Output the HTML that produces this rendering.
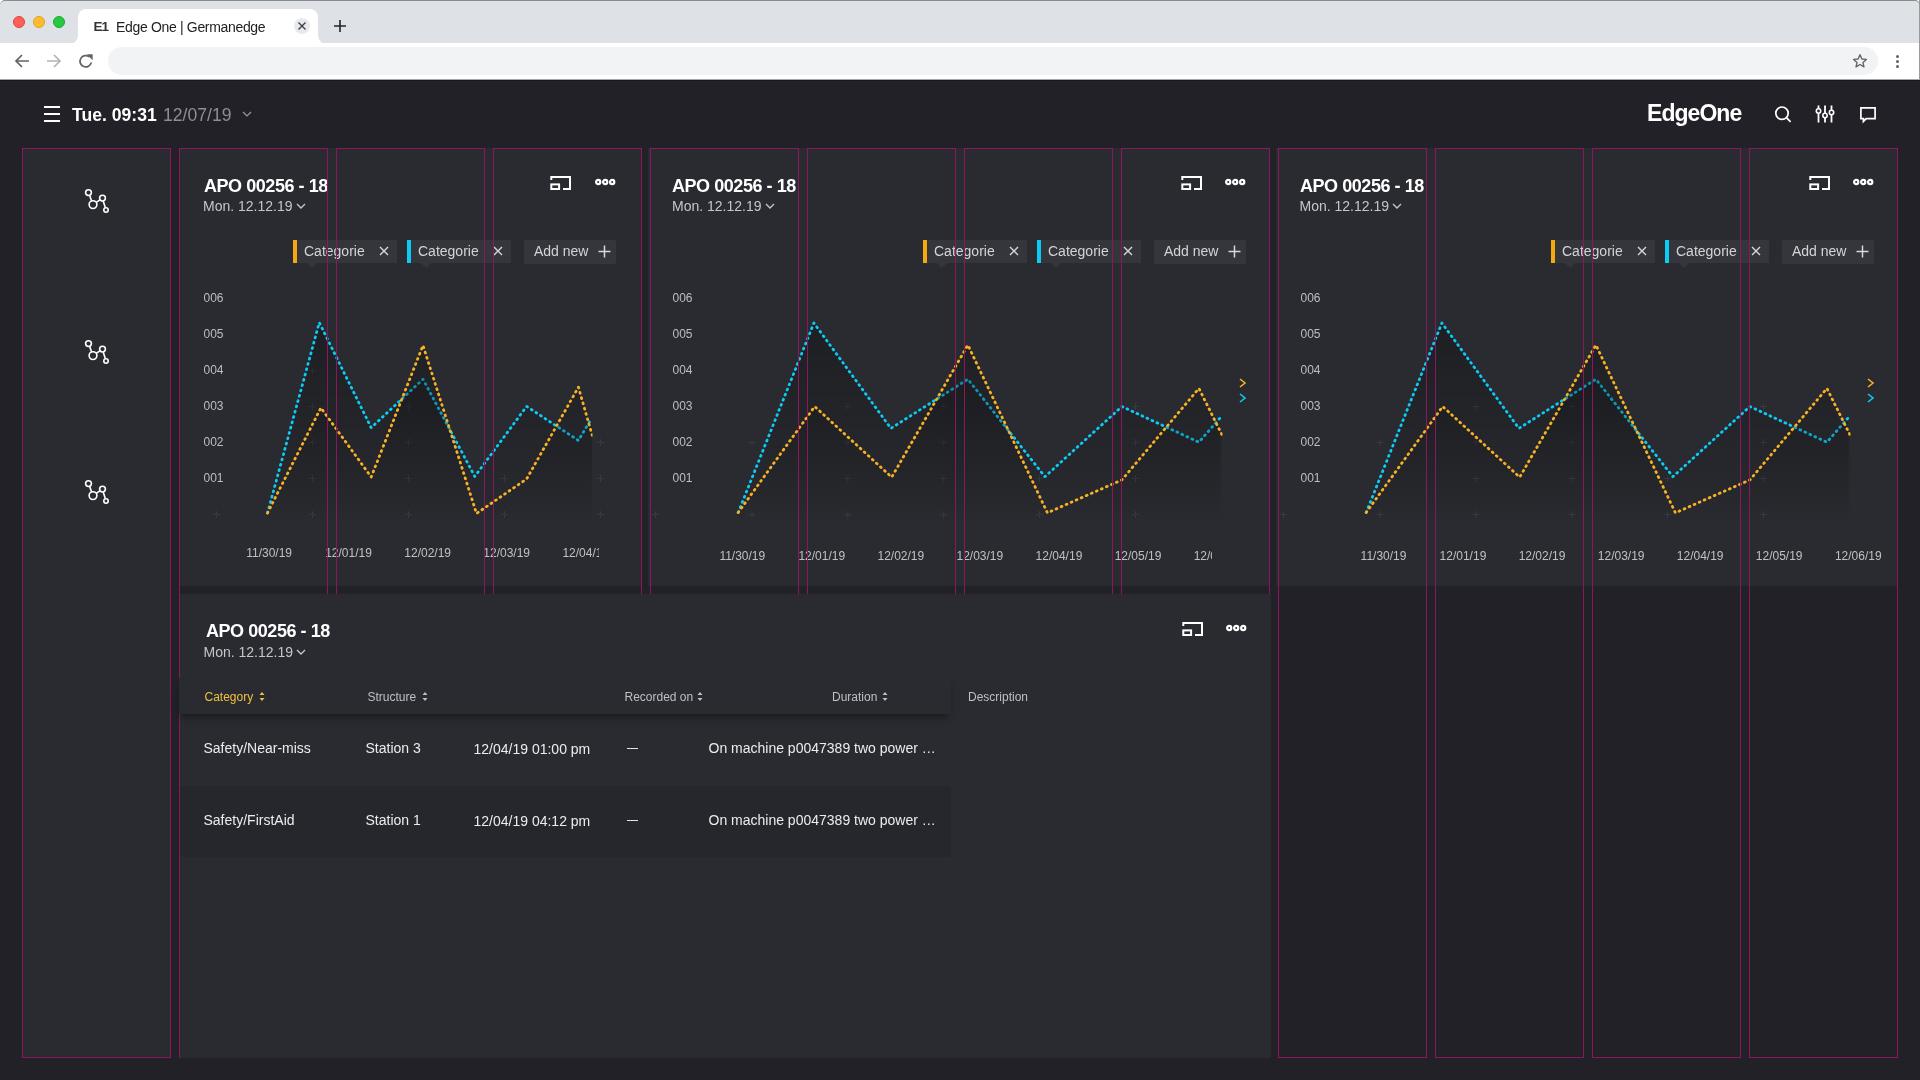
<!DOCTYPE html>
<html><head><meta charset="utf-8"><title>Edge One | Germanedge</title>
<style>
*{box-sizing:border-box}
html,body{margin:0;padding:0;width:1920px;height:1080px;overflow:hidden;background:#212127;font-family:"Liberation Sans",sans-serif;}
#root{position:absolute;left:0;top:0;width:1920px;height:1080px;will-change:transform}
.abs{position:absolute}
#chrome{position:absolute;left:0;top:0;width:1920px;height:80px;background:#fff}
#tabbar{position:absolute;left:0;top:0;width:1920px;height:43px;background:#dee1e6;border-top:1px solid #8a8a8a;border-right:1px solid #9a9a9a;border-radius:5px 5px 0 0}
.light{position:absolute;width:12px;height:12px;border-radius:50%;top:15px}
#tab{position:absolute;left:78px;top:7.5px;width:240px;height:35px;background:#fff;border-radius:8px 8px 0 0}
#tab:before,#tab:after{content:"";position:absolute;bottom:0;width:8px;height:8px;background:radial-gradient(circle at 0 0,transparent 8px,#fff 8.5px)}
#tab:before{left:-8px;background:radial-gradient(circle at 0 0,transparent 7.5px,#fff 8px)}
#tab:after{right:-8px;background:radial-gradient(circle at 100% 0,transparent 7.5px,#fff 8px)}
#omni{position:absolute;left:108px;top:47px;width:1770px;height:28px;border-radius:14px;background:#f1f3f4}
.ovl{position:absolute;top:148px;width:149px;height:910px;border:1px solid #8c1660;z-index:5}
.card{position:absolute;background:#2a2b30}
.ttl{position:absolute;color:#fff;font-weight:bold;font-size:18px;letter-spacing:-0.45px;line-height:20px;white-space:nowrap;z-index:4}
.sub{position:absolute;color:#c6c6ca;font-size:14px;line-height:16px;white-space:nowrap;z-index:4}
.tag{position:absolute;width:104px;height:23px;background:#35363c;z-index:4}
.tag .bar{position:absolute;left:0;top:0;width:4px;height:23px}
.tag .tt{position:absolute;left:11px;top:3px;font-size:14px;line-height:17px;color:#d4d4d8}
.tag .tx{position:absolute;left:86px;top:6px}
.tag .ptr{position:absolute;left:14px;top:23px;width:0;height:0;border-left:5px solid transparent;border-right:5px solid transparent;border-top:5px solid #35363c}
.addnew{position:absolute;width:92px;height:24px;background:#35363c;border-radius:2px;z-index:4}
.addnew .tt{position:absolute;left:10px;top:3px;font-size:14px;line-height:17px;color:#d4d4d8}
.addnew .tp{position:absolute;left:74px;top:4.5px}
.yl{position:absolute;font-size:12px;line-height:14px;color:#bdbdc2;z-index:4}
.xl{position:absolute;top:545px;font-size:12px;line-height:14px;color:#c0c0c4;white-space:nowrap}
.th{position:absolute;top:690px;font-size:12px;line-height:14px;color:#bfbfc4;white-space:nowrap;z-index:8}
.td{position:absolute;font-size:14px;line-height:16px;color:#ececef;white-space:nowrap;z-index:8}
</style></head><body><div id="root">
<div id="chrome">
<div id="tabbar">
<div class="light" style="left:13px;background:#fe5f57;border:0.5px solid #e0443e"></div>
<div class="light" style="left:33px;background:#febc2e;border:0.5px solid #dea123"></div>
<div class="light" style="left:53px;background:#28c840;border:0.5px solid #1aab29"></div>
<div id="tab">
<span class="abs" style="left:15.5px;top:10px;font-size:13.5px;font-weight:bold;color:#333;letter-spacing:-0.9px;line-height:15px">E1</span>
<span class="abs" style="left:38px;top:10px;font-size:14px;color:#222;letter-spacing:-0.33px;line-height:17px;white-space:nowrap">Edge One | Germanedge</span>
<div class="abs" style="left:216px;top:9px;width:16px;height:16px;border-radius:50%;background:#e8eaed"></div>
<svg class="abs" style="left:219px;top:12px" width="10" height="10" viewBox="0 0 10 10"><path d="M1.5 1.5 L8.5 8.5 M8.5 1.5 L1.5 8.5" stroke="#3c4043" stroke-width="1.4"/></svg>
</div>
<svg class="abs" style="left:333px;top:18px" width="14" height="14" viewBox="0 0 14 14"><path d="M7 1 V13 M1 7 H13" stroke="#222326" stroke-width="1.6"/></svg>
</div>
<svg class="abs" style="left:14px;top:53px" width="16" height="16" viewBox="0 0 16 16"><path d="M15 8 H2 M8 2 L2 8 L8 14" fill="none" stroke="#5f6368" stroke-width="1.7"/></svg>
<svg class="abs" style="left:46px;top:53px" width="16" height="16" viewBox="0 0 16 16"><path d="M1 8 H14 M8 2 L14 8 L8 14" fill="none" stroke="#b0b3b8" stroke-width="1.7"/></svg>
<svg class="abs" style="left:78px;top:53px" width="16" height="16" viewBox="0 0 16 16"><path d="M13.3 9.3 A5.7 5.7 0 1 1 11.4 3.9" fill="none" stroke="#5f6368" stroke-width="1.7"/><path d="M8.6 1.2 H14.6 V7.2 Z" fill="#5f6368"/></svg>
<div id="omni"></div>
<svg class="abs" style="left:1852px;top:53px" width="16" height="16" viewBox="0 0 24 24"><path d="M12 2.6 L14.8 9 L21.6 9.6 L16.4 14.1 L18 20.8 L12 17.2 L6 20.8 L7.6 14.1 L2.4 9.6 L9.2 9 Z" fill="none" stroke="#5f6368" stroke-width="2" stroke-linejoin="round"/></svg>
<div class="abs" style="left:1896px;top:55px;width:3.2px;height:3.2px;border-radius:50%;background:#5f6368"></div>
<div class="abs" style="left:1896px;top:60px;width:3.2px;height:3.2px;border-radius:50%;background:#5f6368"></div>
<div class="abs" style="left:1896px;top:65px;width:3.2px;height:3.2px;border-radius:50%;background:#5f6368"></div>
<div class="abs" style="left:1919px;top:0;width:1px;height:80px;background:#9a9a9a"></div>
</div>
<div class="abs" style="left:0;top:79px;width:1920px;height:1px;background:#a6a6a9"></div><div class="abs" style="left:0;top:80px;width:1920px;height:1px;background:#18181c"></div>


<div class="abs" style="left:44px;top:106px;width:16px;height:2px;background:#fff"></div>
<div class="abs" style="left:44px;top:113px;width:16px;height:2px;background:#fff"></div>
<div class="abs" style="left:44px;top:120px;width:16px;height:2px;background:#fff"></div>
<div class="abs" style="left:72px;top:104.5px;font-size:17.6px;font-weight:bold;color:#fff;line-height:20px;white-space:nowrap">Tue. 09:31</div>
<div class="abs" style="left:163px;top:104.5px;font-size:17.6px;color:#8e8e93;line-height:20px;white-space:nowrap">12/07/19</div>
<svg class="abs" style="left:242px;top:111px" width="10" height="7" viewBox="0 0 10 7"><path d="M1 1 L5 5 L9 1" fill="none" stroke="#9a9a9e" stroke-width="1.2"/></svg>
<div class="abs" style="left:1647px;top:99.5px;font-size:23px;font-weight:bold;color:#fff;line-height:26px;letter-spacing:-0.95px;white-space:nowrap">EdgeOne</div>
<svg class="abs" style="left:1773px;top:104px" width="20" height="20" viewBox="0 0 20 20"><circle cx="9" cy="9.2" r="6.2" fill="none" stroke="#fff" stroke-width="1.7"/><path d="M13.4 13.6 L17.6 17.8" stroke="#fff" stroke-width="1.7"/></svg>
<svg class="abs" style="left:1815px;top:105px" width="20" height="18" viewBox="0 0 20 18"><g stroke="#fff" stroke-width="1.8" fill="none"><path d="M3.5 0.5 V17.5 M10 0.5 V17.5 M16.5 0.5 V17.5"/></g><g fill="#212127" stroke="#fff" stroke-width="1.6"><circle cx="3.5" cy="6" r="2.2"/><circle cx="10" cy="10.5" r="2.2"/><circle cx="16.5" cy="7.5" r="2.2"/></g></svg>
<svg class="abs" style="left:1859px;top:106px" width="18" height="18" viewBox="0 0 18 18"><path d="M1.9 1.9 H16.1 V12.6 H7.2 L4.4 15.4 V12.6 H1.9 Z" fill="none" stroke="#fff" stroke-width="1.7" stroke-linejoin="miter"/></svg>

<div class="card" style="left:22px;top:148px;width:149px;height:910px"></div>
<svg style="z-index:6;position:absolute;left:81.5px;top:185.6px" width="30" height="30" viewBox="0 0 30 30">
<g fill="none" stroke="#fff" stroke-width="1.6">
<circle cx="6.5" cy="6.6" r="2.9"/><circle cx="11" cy="18.6" r="3.9"/><circle cx="20.5" cy="12.1" r="2.9"/><circle cx="24" cy="24" r="2.2"/>
<line x1="7.6" y1="9.3" x2="9.6" y2="15"/><line x1="14.2" y1="16.4" x2="17.9" y2="13.8"/><line x1="21.2" y1="14.9" x2="23.4" y2="21.8"/>
</g></svg>
<svg style="z-index:6;position:absolute;left:81.5px;top:337.3px" width="30" height="30" viewBox="0 0 30 30">
<g fill="none" stroke="#fff" stroke-width="1.6">
<circle cx="6.5" cy="6.6" r="2.9"/><circle cx="11" cy="18.6" r="3.9"/><circle cx="20.5" cy="12.1" r="2.9"/><circle cx="24" cy="24" r="2.2"/>
<line x1="7.6" y1="9.3" x2="9.6" y2="15"/><line x1="14.2" y1="16.4" x2="17.9" y2="13.8"/><line x1="21.2" y1="14.9" x2="23.4" y2="21.8"/>
</g></svg>
<svg style="z-index:6;position:absolute;left:81.5px;top:477.3px" width="30" height="30" viewBox="0 0 30 30">
<g fill="none" stroke="#fff" stroke-width="1.6">
<circle cx="6.5" cy="6.6" r="2.9"/><circle cx="11" cy="18.6" r="3.9"/><circle cx="20.5" cy="12.1" r="2.9"/><circle cx="24" cy="24" r="2.2"/>
<line x1="7.6" y1="9.3" x2="9.6" y2="15"/><line x1="14.2" y1="16.4" x2="17.9" y2="13.8"/><line x1="21.2" y1="14.9" x2="23.4" y2="21.8"/>
</g></svg>
<div class="card" style="left:179px;top:148px;width:463px;height:438px"></div>
<div class="card" style="left:648px;top:148px;width:622px;height:438px"></div>
<div class="card" style="left:1276px;top:148px;width:622px;height:438px"></div>
<div class="ovl" style="left:22px"></div>
<div class="ovl" style="left:179px"></div>
<div class="ovl" style="left:336px"></div>
<div class="ovl" style="left:493px"></div>
<div class="ovl" style="left:650px"></div>
<div class="ovl" style="left:807px"></div>
<div class="ovl" style="left:964px"></div>
<div class="ovl" style="left:1121px"></div>
<div class="ovl" style="left:1278px"></div>
<div class="ovl" style="left:1435px"></div>
<div class="ovl" style="left:1592px"></div>
<div class="ovl" style="left:1749px"></div>
<div class="ttl" style="left:204px;top:176px">APO 00256 - 18</div>
<div class="sub" style="left:203px;top:198px">Mon. 12.12.19<svg width="10" height="7" viewBox="0 0 10 7" style="margin-left:3px;vertical-align:1px"><path d="M1 1 L5 5 L9 1" fill="none" stroke="#c8c8cc" stroke-width="1.3"/></svg></div>
<div class="ttl" style="left:672px;top:176px">APO 00256 - 18</div>
<div class="sub" style="left:672px;top:198px">Mon. 12.12.19<svg width="10" height="7" viewBox="0 0 10 7" style="margin-left:3px;vertical-align:1px"><path d="M1 1 L5 5 L9 1" fill="none" stroke="#c8c8cc" stroke-width="1.3"/></svg></div>
<div class="ttl" style="left:1300px;top:176px">APO 00256 - 18</div>
<div class="sub" style="left:1299.5px;top:198px">Mon. 12.12.19<svg width="10" height="7" viewBox="0 0 10 7" style="margin-left:3px;vertical-align:1px"><path d="M1 1 L5 5 L9 1" fill="none" stroke="#c8c8cc" stroke-width="1.3"/></svg></div>
<svg style="z-index:4;position:absolute;left:549px;top:175px" width="23" height="18" viewBox="0 0 23 18">
<g fill="none" stroke="#fff" stroke-width="2">
<path d="M2.3 5 V2 H21 V14 H14"/><rect x="2.3" y="9.4" width="7.8" height="4.6"/>
</g></svg>
<svg style="z-index:4;position:absolute;left:595px;top:178px" width="21" height="8" viewBox="0 0 21 8">
<g fill="none" stroke="#fff" stroke-width="2.2"><circle cx="3.2" cy="4" r="2.1"/><circle cx="10.2" cy="4" r="2.1"/><circle cx="17.2" cy="4" r="2.1"/></g></svg>
<svg style="z-index:4;position:absolute;left:1180px;top:175px" width="23" height="18" viewBox="0 0 23 18">
<g fill="none" stroke="#fff" stroke-width="2">
<path d="M2.3 5 V2 H21 V14 H14"/><rect x="2.3" y="9.4" width="7.8" height="4.6"/>
</g></svg>
<svg style="z-index:4;position:absolute;left:1225px;top:178px" width="21" height="8" viewBox="0 0 21 8">
<g fill="none" stroke="#fff" stroke-width="2.2"><circle cx="3.2" cy="4" r="2.1"/><circle cx="10.2" cy="4" r="2.1"/><circle cx="17.2" cy="4" r="2.1"/></g></svg>
<svg style="z-index:4;position:absolute;left:1808px;top:175px" width="23" height="18" viewBox="0 0 23 18">
<g fill="none" stroke="#fff" stroke-width="2">
<path d="M2.3 5 V2 H21 V14 H14"/><rect x="2.3" y="9.4" width="7.8" height="4.6"/>
</g></svg>
<svg style="z-index:4;position:absolute;left:1853px;top:178px" width="21" height="8" viewBox="0 0 21 8">
<g fill="none" stroke="#fff" stroke-width="2.2"><circle cx="3.2" cy="4" r="2.1"/><circle cx="10.2" cy="4" r="2.1"/><circle cx="17.2" cy="4" r="2.1"/></g></svg>
<div class="tag" style="left:293px;top:240px"><div class="bar" style="background:#f5a90c"></div><span class="tt">Categorie</span><svg class="tx" width="10" height="10" viewBox="0 0 10 10"><path d="M1 1 L9 9 M9 1 L1 9" stroke="#d8d8dc" stroke-width="1.35"/></svg><div class="ptr"></div></div><div class="tag" style="left:407px;top:240px"><div class="bar" style="background:#0ccbf4"></div><span class="tt">Categorie</span><svg class="tx" width="10" height="10" viewBox="0 0 10 10"><path d="M1 1 L9 9 M9 1 L1 9" stroke="#d8d8dc" stroke-width="1.35"/></svg><div class="ptr"></div></div><div class="addnew" style="left:524px;top:240px"><span class="tt">Add new</span><svg class="tp" width="13" height="13" viewBox="0 0 13 13"><path d="M6.5 0.5 V12.5 M0.5 6.5 H12.5" stroke="#d8d8dc" stroke-width="1.5"/></svg></div>
<div class="tag" style="left:923px;top:240px"><div class="bar" style="background:#f5a90c"></div><span class="tt">Categorie</span><svg class="tx" width="10" height="10" viewBox="0 0 10 10"><path d="M1 1 L9 9 M9 1 L1 9" stroke="#d8d8dc" stroke-width="1.35"/></svg><div class="ptr"></div></div><div class="tag" style="left:1037px;top:240px"><div class="bar" style="background:#0ccbf4"></div><span class="tt">Categorie</span><svg class="tx" width="10" height="10" viewBox="0 0 10 10"><path d="M1 1 L9 9 M9 1 L1 9" stroke="#d8d8dc" stroke-width="1.35"/></svg><div class="ptr"></div></div><div class="addnew" style="left:1154px;top:240px"><span class="tt">Add new</span><svg class="tp" width="13" height="13" viewBox="0 0 13 13"><path d="M6.5 0.5 V12.5 M0.5 6.5 H12.5" stroke="#d8d8dc" stroke-width="1.5"/></svg></div>
<div class="tag" style="left:1551px;top:240px"><div class="bar" style="background:#f5a90c"></div><span class="tt">Categorie</span><svg class="tx" width="10" height="10" viewBox="0 0 10 10"><path d="M1 1 L9 9 M9 1 L1 9" stroke="#d8d8dc" stroke-width="1.35"/></svg><div class="ptr"></div></div><div class="tag" style="left:1665px;top:240px"><div class="bar" style="background:#0ccbf4"></div><span class="tt">Categorie</span><svg class="tx" width="10" height="10" viewBox="0 0 10 10"><path d="M1 1 L9 9 M9 1 L1 9" stroke="#d8d8dc" stroke-width="1.35"/></svg><div class="ptr"></div></div><div class="addnew" style="left:1782px;top:240px"><span class="tt">Add new</span><svg class="tp" width="13" height="13" viewBox="0 0 13 13"><path d="M6.5 0.5 V12.5 M0.5 6.5 H12.5" stroke="#d8d8dc" stroke-width="1.5"/></svg></div>
<div class="yl" style="left:203.5px;top:291px">006</div><div class="yl" style="left:203.5px;top:327px">005</div><div class="yl" style="left:203.5px;top:363px">004</div><div class="yl" style="left:203.5px;top:399px">003</div><div class="yl" style="left:203.5px;top:435px">002</div><div class="yl" style="left:203.5px;top:471px">001</div>
<div class="yl" style="left:672.5px;top:291px">006</div><div class="yl" style="left:672.5px;top:327px">005</div><div class="yl" style="left:672.5px;top:363px">004</div><div class="yl" style="left:672.5px;top:399px">003</div><div class="yl" style="left:672.5px;top:435px">002</div><div class="yl" style="left:672.5px;top:471px">001</div>
<div class="yl" style="left:1300.5px;top:291px">006</div><div class="yl" style="left:1300.5px;top:327px">005</div><div class="yl" style="left:1300.5px;top:363px">004</div><div class="yl" style="left:1300.5px;top:399px">003</div><div class="yl" style="left:1300.5px;top:435px">002</div><div class="yl" style="left:1300.5px;top:471px">001</div>
<svg class="abs" style="left:0;top:0;z-index:2" width="1920" height="1080" viewBox="0 0 1920 1080"><defs>
<linearGradient id="gf" gradientUnits="userSpaceOnUse" x1="0" y1="320" x2="0" y2="520">
<stop offset="0" stop-color="#111115" stop-opacity="0.62"/>
<stop offset="1" stop-color="#111115" stop-opacity="0"/>
</linearGradient>
</defs><path d="M213 514.5 H220 M216.5 511 V518" stroke="#393a41" stroke-width="1"/><path d="M309 370.5 H316 M312.5 367 V374" stroke="#393a41" stroke-width="1"/><path d="M309 406.5 H316 M312.5 403 V410" stroke="#393a41" stroke-width="1"/><path d="M309 442.5 H316 M312.5 439 V446" stroke="#393a41" stroke-width="1"/><path d="M309 478.5 H316 M312.5 475 V482" stroke="#393a41" stroke-width="1"/><path d="M309 514.5 H316 M312.5 511 V518" stroke="#393a41" stroke-width="1"/><path d="M405 406.5 H412 M408.5 403 V410" stroke="#393a41" stroke-width="1"/><path d="M405 442.5 H412 M408.5 439 V446" stroke="#393a41" stroke-width="1"/><path d="M405 478.5 H412 M408.5 475 V482" stroke="#393a41" stroke-width="1"/><path d="M405 514.5 H412 M408.5 511 V518" stroke="#393a41" stroke-width="1"/><path d="M501 478.5 H508 M504.5 475 V482" stroke="#393a41" stroke-width="1"/><path d="M501 514.5 H508 M504.5 511 V518" stroke="#393a41" stroke-width="1"/><path d="M597 442.5 H604 M600.5 439 V446" stroke="#393a41" stroke-width="1"/><path d="M597 478.5 H604 M600.5 475 V482" stroke="#393a41" stroke-width="1"/><path d="M597 514.5 H604 M600.5 511 V518" stroke="#393a41" stroke-width="1"/><path d="M652 514.5 H659 M655.5 511 V518" stroke="#393a41" stroke-width="1"/><path d="M748.5 442.5 H755.5 M752.0 439 V446" stroke="#393a41" stroke-width="1"/><path d="M748.5 514.5 H755.5 M752.0 511 V518" stroke="#393a41" stroke-width="1"/><path d="M844.3 406.5 H851.3 M847.8 403 V410" stroke="#393a41" stroke-width="1"/><path d="M844.3 442.5 H851.3 M847.8 439 V446" stroke="#393a41" stroke-width="1"/><path d="M844.3 478.5 H851.3 M847.8 475 V482" stroke="#393a41" stroke-width="1"/><path d="M844.3 514.5 H851.3 M847.8 511 V518" stroke="#393a41" stroke-width="1"/><path d="M940.2 406.5 H947.2 M943.7 403 V410" stroke="#393a41" stroke-width="1"/><path d="M940.2 442.5 H947.2 M943.7 439 V446" stroke="#393a41" stroke-width="1"/><path d="M940.2 478.5 H947.2 M943.7 475 V482" stroke="#393a41" stroke-width="1"/><path d="M940.2 514.5 H947.2 M943.7 511 V518" stroke="#393a41" stroke-width="1"/><path d="M1036 478.5 H1043 M1039.5 475 V482" stroke="#393a41" stroke-width="1"/><path d="M1036 514.5 H1043 M1039.5 511 V518" stroke="#393a41" stroke-width="1"/><path d="M1132 406.5 H1139 M1135.5 403 V410" stroke="#393a41" stroke-width="1"/><path d="M1132 442.5 H1139 M1135.5 439 V446" stroke="#393a41" stroke-width="1"/><path d="M1132 478.5 H1139 M1135.5 475 V482" stroke="#393a41" stroke-width="1"/><path d="M1132 514.5 H1139 M1135.5 511 V518" stroke="#393a41" stroke-width="1"/><path d="M1280 514.5 H1287 M1283.5 511 V518" stroke="#393a41" stroke-width="1"/><path d="M1376.5 442.5 H1383.5 M1380.0 439 V446" stroke="#393a41" stroke-width="1"/><path d="M1376.5 514.5 H1383.5 M1380.0 511 V518" stroke="#393a41" stroke-width="1"/><path d="M1472.3 406.5 H1479.3 M1475.8 403 V410" stroke="#393a41" stroke-width="1"/><path d="M1472.3 442.5 H1479.3 M1475.8 439 V446" stroke="#393a41" stroke-width="1"/><path d="M1472.3 478.5 H1479.3 M1475.8 475 V482" stroke="#393a41" stroke-width="1"/><path d="M1472.3 514.5 H1479.3 M1475.8 511 V518" stroke="#393a41" stroke-width="1"/><path d="M1568.2 406.5 H1575.2 M1571.7 403 V410" stroke="#393a41" stroke-width="1"/><path d="M1568.2 442.5 H1575.2 M1571.7 439 V446" stroke="#393a41" stroke-width="1"/><path d="M1568.2 478.5 H1575.2 M1571.7 475 V482" stroke="#393a41" stroke-width="1"/><path d="M1568.2 514.5 H1575.2 M1571.7 511 V518" stroke="#393a41" stroke-width="1"/><path d="M1664 478.5 H1671 M1667.5 475 V482" stroke="#393a41" stroke-width="1"/><path d="M1664 514.5 H1671 M1667.5 511 V518" stroke="#393a41" stroke-width="1"/><path d="M1760 406.5 H1767 M1763.5 403 V410" stroke="#393a41" stroke-width="1"/><path d="M1760 442.5 H1767 M1763.5 439 V446" stroke="#393a41" stroke-width="1"/><path d="M1760 478.5 H1767 M1763.5 475 V482" stroke="#393a41" stroke-width="1"/><path d="M1760 514.5 H1767 M1763.5 511 V518" stroke="#393a41" stroke-width="1"/><clipPath id="c1"><rect x="180" y="280" width="412.5" height="260"/></clipPath><clipPath id="c2"><rect x="651" y="280" width="571.5" height="260"/></clipPath><clipPath id="c3"><rect x="1279" y="280" width="571.5" height="260"/></clipPath><g clip-path="url(#c1)"><path d="M267.5 513.0 L319.3 322.6 L371.2 427.7 L423.0 379.2 L474.8 476.5 L526.6 406.4 L578.4 440.5 L591.5 418.5 L591.5 522 L267.5 522 Z" fill="url(#gf)" opacity="0.75"/><path d="M267.5 513.0 L319.3 322.6 L371.2 427.7 L423.0 379.2 L474.8 476.5 L526.6 406.4 L578.4 440.5 L591.5 418.5" fill="none" stroke="#0ccbf4" stroke-width="2.8" stroke-linecap="round" stroke-linejoin="round" stroke-dasharray="0.9 4.6"/><path d="M267.5 513.0 L320.9 407.8 L371.2 477.0 L423.0 345.4 L476.5 513.5 L526.6 479.0 L578.4 387.2 L592.2 435.3 L592.2 522 L267.5 522 Z" fill="url(#gf)" opacity="0.75"/><path d="M267.5 513.0 L320.9 407.8 L371.2 477.0 L423.0 345.4 L476.5 513.5 L526.6 479.0 L578.4 387.2 L592.2 435.3" fill="none" stroke="#f6b124" stroke-width="2.8" stroke-linecap="round" stroke-linejoin="round" stroke-dasharray="0.9 4.6"/></g><g clip-path="url(#c2)"><path d="M738.2 512.5 L813.9 323.0 L890.9 428.4 L967.9 379.2 L1044.9 476.7 L1121.9 406.5 L1198.9 442.2 L1220.0 418.0 L1220.0 522 L738.2 522 Z" fill="url(#gf)" opacity="0.75"/><path d="M738.2 512.5 L813.9 323.0 L890.9 428.4 L967.9 379.2 L1044.9 476.7 L1121.9 406.5 L1198.9 442.2 L1220.0 418.0" fill="none" stroke="#0ccbf4" stroke-width="2.8" stroke-linecap="round" stroke-linejoin="round" stroke-dasharray="0.9 4.6"/><path d="M738.2 512.5 L814.7 406.5 L891.7 477.2 L967.9 345.0 L1047.4 512.8 L1121.9 479.9 L1198.9 388.4 L1222.0 434.8 L1222.0 522 L738.2 522 Z" fill="url(#gf)" opacity="0.75"/><path d="M738.2 512.5 L814.7 406.5 L891.7 477.2 L967.9 345.0 L1047.4 512.8 L1121.9 479.9 L1198.9 388.4 L1222.0 434.8" fill="none" stroke="#f6b124" stroke-width="2.8" stroke-linecap="round" stroke-linejoin="round" stroke-dasharray="0.9 4.6"/></g><g clip-path="url(#c3)"><path d="M1366.2 512.5 L1441.9 323.0 L1518.9 428.4 L1595.9 379.2 L1672.9 476.7 L1749.9 406.5 L1826.9 442.2 L1848.0 418.0 L1848.0 522 L1366.2 522 Z" fill="url(#gf)" opacity="0.75"/><path d="M1366.2 512.5 L1441.9 323.0 L1518.9 428.4 L1595.9 379.2 L1672.9 476.7 L1749.9 406.5 L1826.9 442.2 L1848.0 418.0" fill="none" stroke="#0ccbf4" stroke-width="2.8" stroke-linecap="round" stroke-linejoin="round" stroke-dasharray="0.9 4.6"/><path d="M1366.2 512.5 L1442.7 406.5 L1519.7 477.2 L1595.9 345.0 L1675.4 512.8 L1749.9 479.9 L1826.9 388.4 L1850.0 434.8 L1850.0 522 L1366.2 522 Z" fill="url(#gf)" opacity="0.75"/><path d="M1366.2 512.5 L1442.7 406.5 L1519.7 477.2 L1595.9 345.0 L1675.4 512.8 L1749.9 479.9 L1826.9 388.4 L1850.0 434.8" fill="none" stroke="#f6b124" stroke-width="2.8" stroke-linecap="round" stroke-linejoin="round" stroke-dasharray="0.9 4.6"/></g><path d="M1240 379 L1245 383 L1240 387" fill="none" stroke="#f6b124" stroke-width="1.6"/><path d="M1240 394 L1245 398 L1240 402" fill="none" stroke="#0ccbf4" stroke-width="1.6"/><path d="M1868 379 L1873 383 L1868 387" fill="none" stroke="#f6b124" stroke-width="1.6"/><path d="M1868 394 L1873 398 L1868 402" fill="none" stroke="#0ccbf4" stroke-width="1.6"/></svg>
<div class="abs" style="left:180px;top:0;width:419px;height:600px;overflow:hidden;z-index:3"><div class="abs" style="left:-180px;top:1px;width:1920px;height:600px"><div class="xl" style="left:246.2px">11/30/19</div><div class="xl" style="left:325.2px">12/01/19</div><div class="xl" style="left:404.3px">12/02/19</div><div class="xl" style="left:483.3px">12/03/19</div><div class="xl" style="left:562.4px">12/04/19</div></div></div>
<div class="abs" style="left:651px;top:0;width:561px;height:600px;overflow:hidden;z-index:3"><div class="abs" style="left:-652px;top:4px;width:1920px;height:600px"><div class="xl" style="left:720.4px">11/30/19</div><div class="xl" style="left:799.4px">12/01/19</div><div class="xl" style="left:878.5px">12/02/19</div><div class="xl" style="left:957.5px">12/03/19</div><div class="xl" style="left:1036.6px">12/04/19</div><div class="xl" style="left:1115.7px">12/05/19</div><div class="xl" style="left:1194.7px">12/06/19</div></div></div>
<div class="abs" style="left:1279px;top:0;width:618px;height:600px;overflow:hidden;z-index:3"><div class="abs" style="left:-1280px;top:4px;width:1920px;height:600px"><div class="xl" style="left:1361.6px">11/30/19</div><div class="xl" style="left:1440.6px">12/01/19</div><div class="xl" style="left:1519.7px">12/02/19</div><div class="xl" style="left:1598.8px">12/03/19</div><div class="xl" style="left:1677.8px">12/04/19</div><div class="xl" style="left:1756.8px">12/05/19</div><div class="xl" style="left:1835.9px">12/06/19</div></div></div>
<div class="card" style="left:180px;top:594px;width:1091px;height:464px;z-index:7"></div>
<div class="ttl" style="z-index:8;left:206px;top:621px">APO 00256 - 18</div>
<div class="sub" style="z-index:8;left:203.5px;top:644px">Mon. 12.12.19<svg width="10" height="7" viewBox="0 0 10 7" style="margin-left:3px;vertical-align:1px"><path d="M1 1 L5 5 L9 1" fill="none" stroke="#c8c8cc" stroke-width="1.3"/></svg></div>
<svg style="z-index:8;position:absolute;left:1181px;top:621px" width="23" height="18" viewBox="0 0 23 18">
<g fill="none" stroke="#fff" stroke-width="2">
<path d="M2.3 5 V2 H21 V14 H14"/><rect x="2.3" y="9.4" width="7.8" height="4.6"/>
</g></svg>
<svg style="z-index:8;position:absolute;left:1226px;top:624px" width="21" height="8" viewBox="0 0 21 8">
<g fill="none" stroke="#fff" stroke-width="2.2"><circle cx="3.2" cy="4" r="2.1"/><circle cx="10.2" cy="4" r="2.1"/><circle cx="17.2" cy="4" r="2.1"/></g></svg>

<div class="abs" style="left:179px;top:678px;width:772px;height:36px;background:#2a2b30;box-shadow:0 5px 8px -2px rgba(0,0,0,0.42);z-index:8"></div>
<div class="abs" style="left:180px;top:786px;width:771px;height:71px;background:#26272c;z-index:7"></div>
<div class="th" style="left:204.5px;color:#f0c040">Category</div><svg class="abs" style="left:258.5px;top:691px;z-index:8" width="6" height="11" viewBox="0 0 6 11"><path d="M0.5 4 L3 1 L5.5 4 Z M0.5 7 L3 10 L5.5 7 Z" fill="#f0c040"/></svg>
<div class="th" style="left:367.5px">Structure</div><svg class="abs" style="left:422px;top:691px;z-index:8" width="6" height="11" viewBox="0 0 6 11"><path d="M0.5 4 L3 1 L5.5 4 Z M0.5 7 L3 10 L5.5 7 Z" fill="#bfbfc4"/></svg>
<div class="th" style="left:624.5px">Recorded on</div><svg class="abs" style="left:697px;top:691px;z-index:8" width="6" height="11" viewBox="0 0 6 11"><path d="M0.5 4 L3 1 L5.5 4 Z M0.5 7 L3 10 L5.5 7 Z" fill="#bfbfc4"/></svg>
<div class="th" style="left:832px">Duration</div><svg class="abs" style="left:881.5px;top:691px;z-index:8" width="6" height="11" viewBox="0 0 6 11"><path d="M0.5 4 L3 1 L5.5 4 Z M0.5 7 L3 10 L5.5 7 Z" fill="#bfbfc4"/></svg>
<div class="th" style="left:968px">Description</div>
<div class="td" style="left:203.5px;top:740px">Safety/Near-miss</div>
<div class="td" style="left:365.5px;top:740px">Station 3</div>
<div class="td" style="left:473.5px;top:741px">12/04/19 01:00 pm</div>
<div class="abs" style="left:627px;top:748px;width:11px;height:1.4px;background:#e4e4e7;z-index:8"></div>
<div class="td" style="left:708.5px;top:740px">On machine p0047389 two power …</div>
<div class="td" style="left:203.5px;top:812px">Safety/FirstAid</div>
<div class="td" style="left:365.5px;top:812px">Station 1</div>
<div class="td" style="left:473.5px;top:813px">12/04/19 04:12 pm</div>
<div class="abs" style="left:627px;top:820px;width:11px;height:1.4px;background:#e4e4e7;z-index:8"></div>
<div class="td" style="left:708.5px;top:812px">On machine p0047389 two power …</div>

</div></body></html>
